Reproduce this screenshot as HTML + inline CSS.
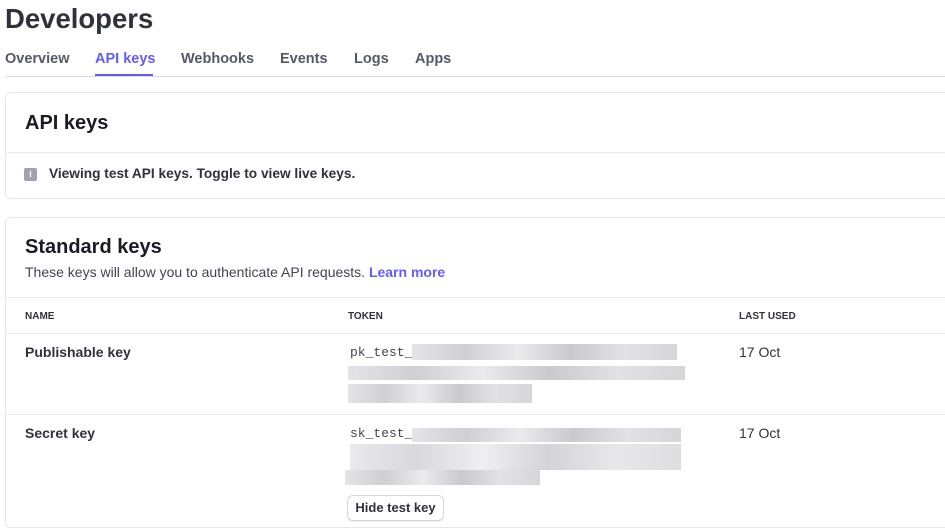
<!DOCTYPE html>
<html><head><style>
*{margin:0;padding:0;box-sizing:border-box}
body{width:945px;height:531px;overflow:hidden;background:#fff;font-family:"Liberation Sans",sans-serif;color:#30313d;position:relative}
.a{position:absolute;white-space:nowrap}
.tab{position:absolute;top:51px;font-size:14.5px;font-weight:bold;color:#545969}
.card{position:absolute;left:5px;width:960px;border:1px solid #e6e6ea;border-radius:6px;background:#fff}
.hl{position:absolute;left:5px;width:945px;height:1px;background:#ebebef}
.h{font-size:20px;font-weight:bold;color:#1a1b25}
.th{font-size:10px;font-weight:bold;color:#30313d;top:311px}
.b{position:absolute;background:linear-gradient(90deg,#e4e4e8,#cfcfd4 20%,#ebebee 40%,#c9c9ce 60%,#e2e2e6 80%,#d6d6da)}
.mono{font-family:"Liberation Mono",monospace;font-size:13px;color:#414552}
</style></head><body>
<div class="a" style="left:5px;top:3px;font-size:27.5px;font-weight:bold;color:#30313d">Developers</div>
<div class="tab" style="left:5px">Overview</div>
<div class="tab" style="left:95px;color:#635bff">API keys</div>
<div class="tab" style="left:181px">Webhooks</div>
<div class="tab" style="left:280px">Events</div>
<div class="tab" style="left:354px">Logs</div>
<div class="tab" style="left:415px">Apps</div>
<div class="a" style="left:5px;top:76px;width:940px;height:1px;background:#dcdce2"></div>
<div class="a" style="left:95px;top:74px;width:58px;height:2px;background:#635bff"></div>

<div class="card" style="top:92px;height:107px"></div>
<div class="a h" style="left:25px;top:112px">API keys</div>
<div class="hl" style="top:152px"></div>
<div class="a" style="left:24px;top:168px;width:13px;height:13px;border-radius:2px;background:#a0a2ad;color:#fff;font-size:9px;font-weight:bold;text-align:center;line-height:13px">i</div>
<div class="a" style="left:49px;top:166px;font-size:13.7px;font-weight:bold;color:#30313d">Viewing test API keys. Toggle to view live keys.</div>

<div class="card" style="top:217px;height:311px"></div>
<div class="a h" style="left:25px;top:236px">Standard keys</div>
<div class="a" style="left:25px;top:264px;font-size:14px;color:#414552">These keys will allow you to authenticate API requests. <span style="color:#635bff;font-weight:bold">Learn more</span></div>
<div class="hl" style="top:297px"></div>
<div class="a th" style="left:25px">NAME</div>
<div class="a th" style="left:348px">TOKEN</div>
<div class="a th" style="left:739px">LAST USED</div>
<div class="hl" style="top:333px"></div>
<div class="a" style="left:25px;top:344px;font-size:14px;font-weight:bold">Publishable key</div>
<div class="a mono" style="left:350px;top:345px">pk_test_</div>
<div class="b" style="left:412px;top:344px;width:265px;height:16px"></div>
<div class="b" style="left:348px;top:366px;width:337px;height:14px"></div>
<div class="b" style="left:348px;top:384px;width:184px;height:19px"></div>
<div class="a" style="left:739px;top:344px;font-size:14px">17 Oct</div>
<div class="hl" style="top:414px"></div>
<div class="a" style="left:25px;top:425px;font-size:14px;font-weight:bold">Secret key</div>
<div class="a mono" style="left:350px;top:426px">sk_test_</div>
<div class="b" style="left:412px;top:428px;width:269px;height:14px"></div>
<div class="b" style="left:350px;top:444px;width:331px;height:26px;opacity:.8"></div>
<div class="b" style="left:345px;top:470px;width:195px;height:15px"></div>
<div class="a" style="left:739px;top:425px;font-size:14px">17 Oct</div>
<div class="a" style="left:347px;top:495px;width:97px;height:26px;border:1px solid #d5d6dc;border-radius:6px;box-shadow:0 1px 1px rgba(0,0,0,.08);font-size:13px;font-weight:bold;text-align:center;line-height:24px;color:#30313d">Hide test key</div>
</body></html>
